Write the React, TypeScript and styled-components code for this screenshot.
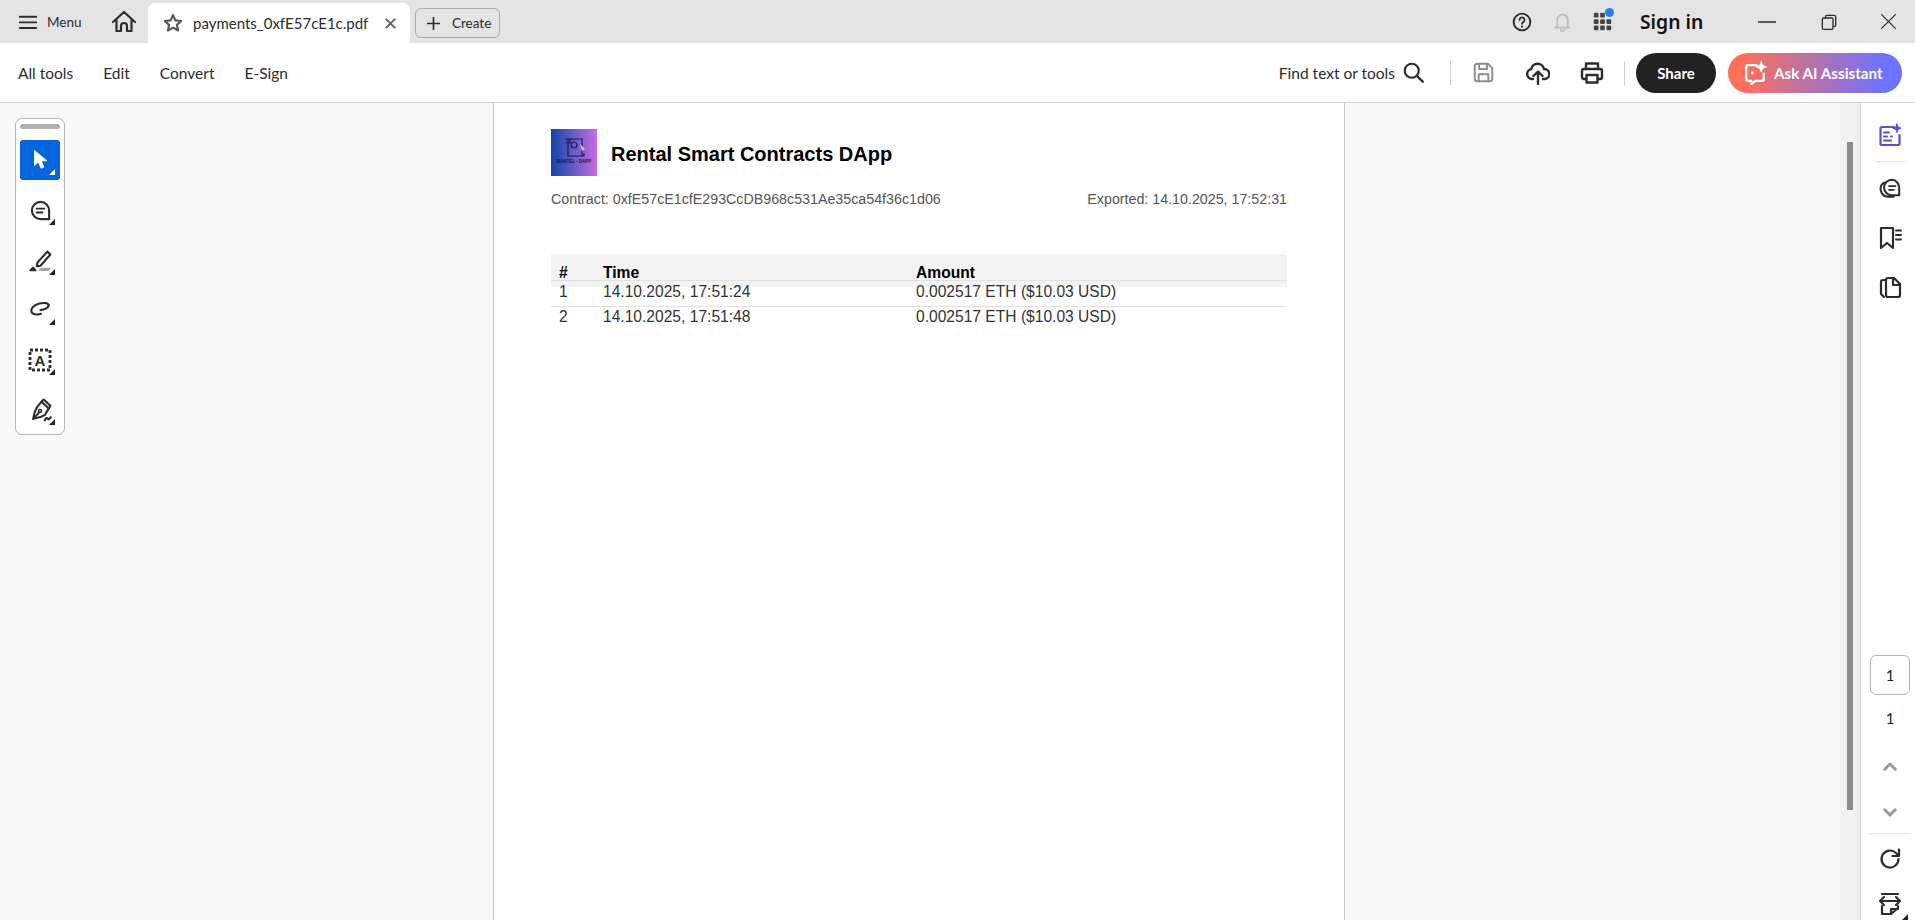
import React from "react";
import styled, { createGlobalStyle } from "styled-components";

const Global = createGlobalStyle`
  html, body { margin: 0; padding: 0; height: 100%; overflow: hidden; background: #fff; }
  #root { height: 100%; }
  * { box-sizing: border-box; }
`;

const uiFont = `"Lato", "Noto Sans", sans-serif`;
const pdfFont = `"Liberation Sans", Arial, sans-serif`;

const Window = styled.div`
  width: 1915px;
  height: 920px;
  display: flex;
  flex-direction: column;
  overflow: hidden;
  font-family: ${uiFont};
  color: #2c2c2c;
`;

/* title bar */
const TitleBar = styled.header`
  height: 43px;
  background: #e4e4e4;
  display: flex;
  align-items: flex-end;
  flex-shrink: 0;
`;
const MenuButton = styled.div`
  height: 43px;
  width: 112px;
  padding-left: 19px;
  display: flex;
  align-items: center;
  gap: 10px;
  font-size: 13.5px;
`;
const HomeButton = styled.div`
  height: 43px;
  width: 36px;
  display: flex;
  align-items: center;
`;
const Tab = styled.div`
  height: 40px;
  width: 262px;
  background: #fff;
  border-radius: 7px 7px 0 0;
  padding-left: 15px;
  display: flex;
  align-items: center;
  font-size: 15px;
`;
const TabName = styled.span`
  margin-left: 10px;
  width: 192px;
  white-space: nowrap;
`;
const CreateButton = styled.div`
  height: 30px;
  width: 85px;
  margin: 0 0 5px 5px;
  border: 1.5px solid #a9a9a9;
  border-radius: 6px;
  padding-left: 11px;
  display: flex;
  align-items: center;
  gap: 12px;
  font-size: 13.5px;
`;
const SystemArea = styled.div`
  margin-left: auto;
  height: 43px;
  display: flex;
  align-items: center;
`;
const Slot = styled.div<{ $w: number }>`
  width: ${(p) => p.$w}px;
  height: 24px;
  display: flex;
  align-items: center;
  position: relative;
  flex-shrink: 0;
`;
const Dot = styled.span`
  position: absolute;
  left: 12px;
  top: -2px;
  width: 9px;
  height: 9px;
  border-radius: 50%;
  background: #2680eb;
`;
const SignIn = styled.span`
  font-family: "Noto Sans", sans-serif;
  font-weight: 600;
  font-size: 19.3px;
  color: #111;
  white-space: nowrap;
`;

/* tool bar */
const ToolBar = styled.nav`
  height: 60px;
  background: #fff;
  border-bottom: 1px solid #d2d2d2;
  display: flex;
  align-items: center;
  padding-left: 18px;
  flex-shrink: 0;
`;
const NavLink = styled.span`
  font-size: 15.5px;
  margin-right: 30px;
  white-space: nowrap;
`;
const ToolActions = styled.div`
  margin-left: auto;
  display: flex;
  align-items: center;
  padding-right: 13px;
`;
const FindLabel = styled.span`
  font-size: 15.5px;
  width: 127px;
  white-space: nowrap;
  text-align: right;
  padding-right: 8px;
`;
const Divider = styled.span<{ $ml: number; $mr?: number }>`
  width: 1px;
  height: 24px;
  background: #cfcfcf;
  flex-shrink: 0;
  margin-left: ${(p) => p.$ml}px;
  margin-right: ${(p) => p.$mr ?? 0}px;
`;
const Pill = styled.div<{ $ai?: boolean }>`
  height: 40px;
  width: ${(p) => (p.$ai ? 174 : 80)}px;
  margin-left: ${(p) => (p.$ai ? 12 : 0)}px;
  border-radius: 20px;
  display: flex;
  align-items: center;
  justify-content: ${(p) => (p.$ai ? "flex-start" : "center")};
  padding-left: ${(p) => (p.$ai ? 15 : 0)}px;
  gap: 6px;
  color: #fff;
  font-weight: 700;
  font-size: ${(p) => (p.$ai ? 15.2 : 15)}px;
  white-space: nowrap;
  background: ${(p) => (p.$ai ? "linear-gradient(90deg, #ff7058 8%, #6b73ff 90%)" : "#222")};
`;

/* document area */
const Workspace = styled.main`
  flex: 1;
  min-height: 0;
  display: flex;
  background: #f8f8f8;
`;
const LeftCanvas = styled.div`
  width: 493px;
  padding: 15px;
  flex-shrink: 0;
`;
const ToolRail = styled.div`
  width: 50px;
  height: 317px;
  background: #fff;
  border: 1px solid #b4b4b4;
  border-radius: 7px;
  padding: 5px 4px;
  display: flex;
  flex-direction: column;
  align-items: center;
`;
const Handle = styled.span`
  width: 40px;
  height: 5px;
  flex-shrink: 0;
  border-radius: 3px;
  background: #b2b2b2;
  margin-bottom: 11px;
`;
const RailButton = styled.div<{ $active?: boolean }>`
  width: 40px;
  height: 40px;
  flex-shrink: 0;
  margin-bottom: 10px;
  border-radius: 3px;
  position: relative;
  display: flex;
  align-items: center;
  justify-content: center;
  background: ${(p) => (p.$active ? "#0265dc" : "transparent")};
  &:last-child { margin-bottom: 0; }
  &::after {
    content: "";
    position: absolute;
    right: 5px;
    bottom: 5px;
    border-style: solid;
    border-width: 0 0 6px 6px;
    border-color: transparent transparent ${(p) => (p.$active ? "#fff" : "#222")} transparent;
  }
`;
const Page = styled.article`
  width: 852px;
  flex-shrink: 0;
  background: #fff;
  border-left: 1px solid #c6c6c6;
  border-right: 1px solid #c6c6c6;
  padding: 26px 57px 0;
  font-family: ${pdfFont};
`;
const DocHeader = styled.div`
  display: flex;
  align-items: center;
  gap: 14px;
`;
const Logo = styled.div`
  width: 46px;
  height: 47px;
  background: linear-gradient(90deg, #0d47a8, #cb6ce6);
`;
const DocTitle = styled.h1`
  margin: 4px 0 0;
  font-size: 20px;
  font-weight: 700;
  color: #000;
`;
const MetaRow = styled.div`
  display: flex;
  justify-content: space-between;
  margin-top: 14px;
  font-size: 14.25px;
  line-height: 18px;
  color: #555;
`;
const PayTable = styled.div`
  margin-top: 46px;
  font-size: 15.6px;
  color: #333;
`;
const HeadRow = styled.div`
  height: 33px;
  background: #f3f3f3;
  position: relative;
  display: grid;
  grid-template-columns: 44px 313px 1fr;
  padding: 10px 0 0 8px;
  line-height: 18px;
  font-weight: 700;
  color: #000;
  &::after {
    content: "";
    position: absolute;
    left: 0;
    right: 0;
    top: 26px;
    height: 1px;
    background: #e2e2e2;
  }
`;
const RowGroup = styled.div`
  margin-top: -5px;
  position: relative;
`;
const BodyRow = styled.div`
  height: 25px;
  display: grid;
  grid-template-columns: 44px 313px 1fr;
  padding: 1px 0 0 8px;
  line-height: 18px;
  border-bottom: 1px solid #e2e2e2;
  &:last-child { border-bottom: 0; }
`;
const RightCanvas = styled.div`
  flex: 1;
`;
const ScrollTrack = styled.div`
  width: 20px;
  flex-shrink: 0;
  background: #f1f1f1;
  padding-top: 39px;
  display: flex;
  justify-content: center;
`;
const ScrollThumb = styled.div`
  width: 6px;
  height: 668px;
  background: #8b8b8b;
`;
const SideRail = styled.aside`
  width: 55px;
  flex-shrink: 0;
  background: #fff;
  border-left: 1px solid #d2d2d2;
  display: flex;
  flex-direction: column;
  align-items: center;
  padding: 20px 0 0 4px;
`;
const SideIcon = styled.div<{ $gap: number; $top?: number }>`
  height: 24px;
  margin-top: ${(p) => p.$top ?? 0}px;
  margin-bottom: ${(p) => p.$gap}px;
  display: flex;
  align-items: center;
  justify-content: center;
  flex-shrink: 0;
`;
const RailRule = styled.span<{ $w: number }>`
  width: ${(p) => p.$w}px;
  height: 1px;
  background: #e1e1e1;
  flex-shrink: 0;
`;
const PageBox = styled.div`
  width: 40px;
  height: 40px;
  margin-top: 356px;
  border: 1px solid #b4b4b4;
  border-radius: 6px;
  display: flex;
  align-items: center;
  justify-content: center;
  font-size: 15px;
  color: #222;
  flex-shrink: 0;
`;
const PageCount = styled.div`
  height: 18px;
  margin-top: 14px;
  line-height: 18px;
  font-size: 15px;
  color: #222;
  flex-shrink: 0;
`;
const Spacer = styled.div<{ $h: number }>`
  height: ${(p) => p.$h}px;
  flex-shrink: 0;
`;
const FitWrap = styled.div`
  position: relative;
  flex-shrink: 0;
  &::after {
    content: "";
    position: absolute;
    right: -6px;
    bottom: -4px;
    border-style: solid;
    border-width: 0 0 6px 6px;
    border-color: transparent transparent #222 transparent;
  }
`;

const Svg = styled.svg<{ $ml?: number; $color: string }>`
  display: block;
  flex-shrink: 0;
  fill: none;
  color: ${(p) => p.$color};
  stroke: currentColor;
  stroke-width: 2;
  stroke-linecap: round;
  stroke-linejoin: round;
  margin-left: ${(p) => p.$ml ?? 0}px;
`;

type IconProps = { size: number; color?: string; ml?: number; children: React.ReactNode };
const Icon = ({ size, color = "#2c2c2c", ml, children }: IconProps) => (
  <Svg $ml={ml} $color={color} width={size} height={size} viewBox="0 0 24 24">
    {children}
  </Svg>
);

const rows = [
  { n: 1, time: "14.10.2025, 17:51:24" },
  { n: 2, time: "14.10.2025, 17:51:48" },
];

export default function App() {
  return (
    <Window>
      <Global />
      <TitleBar>
        <MenuButton>
          <Icon size={18}><path d="M1 5h22M1 12.500h22M1 20h22" strokeWidth="2.400" /></Icon>
          Menu
        </MenuButton>
        <HomeButton>
          <Icon size={24}>
            <path d="M1 12 12 2l11 10M4.500 9.500V21H9v-5a3 3 0 0 1 6 0v5h4.500V9.500" strokeWidth="2.200" />
          </Icon>
        </HomeButton>
        <Tab>
          <Icon size={20} color="#555">
            <path d="m12 2.500 2.900 6.300 6.900.8-5.100 4.600 1.400 6.800-6.100-3.400-6.100 3.400 1.400-6.800L2.200 9.600l6.900-.8z" strokeWidth="2.600" />
          </Icon>
          <TabName>payments_0xfE57cE1c.pdf</TabName>
          <Icon size={11} color="#666"><path d="M3 3l18 18M21 3 3 21" strokeWidth="4.500" /></Icon>
        </Tab>
        <CreateButton>
          <Icon size={13}><path d="M12 1v22M1 12h22" strokeWidth="3" /></Icon>
          Create
        </CreateButton>
        <SystemArea>
          <Slot $w={40}>
            <Icon size={20}>
              <circle cx="12" cy="12" r="10" strokeWidth="2.300" />
              <path d="M9 9.500a3 3 0 1 1 4.500 2.600c-1 .6-1.500 1-1.500 2" strokeWidth="2.200" />
              <path d="M12 17.500v.2" strokeWidth="2.500" />
            </Icon>
          </Slot>
          <Slot $w={41}>
            <Icon size={21} color="#bcbcbc">
              <path d="M6 17V10a6 6 0 0 1 12 0v7l2 2H4zM10 21.500a2 2 0 0 0 4 0" />
            </Icon>
          </Slot>
          <Slot $w={47}>
            <Icon size={19} color="#444">
              <g fill="#444" stroke="none">
                <rect x="1" y="1" width="6" height="6" rx="1.500" /><rect x="9" y="1" width="6" height="6" rx="1.500" />
                <rect x="1" y="9" width="6" height="6" rx="1.500" /><rect x="9" y="9" width="6" height="6" rx="1.500" /><rect x="17" y="9" width="6" height="6" rx="1.500" />
                <rect x="1" y="17" width="6" height="6" rx="1.500" /><rect x="9" y="17" width="6" height="6" rx="1.500" /><rect x="17" y="17" width="6" height="6" rx="1.500" />
              </g>
            </Icon>
            <Dot />
          </Slot>
          <Slot $w={118}><SignIn>Sign in</SignIn></Slot>
          <Slot $w={63}><Icon size={18}><path d="M0 12h24" strokeWidth="2" /></Icon></Slot>
          <Slot $w={60}>
            <Icon size={16}>
              <path d="M7 6V3.500A1.500 1.500 0 0 1 8.500 2h11A2.500 2.500 0 0 1 22 4.500V17a1.500 1.500 0 0 1-1.500 1.500H18" strokeWidth="2" />
              <rect x="2" y="6" width="16" height="17" rx="2" strokeWidth="2" />
            </Icon>
          </Slot>
          <Slot $w={34}><Icon size={15}><path d="M1 1l22 22M23 1 1 23" strokeWidth="2" /></Icon></Slot>
        </SystemArea>
      </TitleBar>

      <ToolBar>
        <NavLink>All tools</NavLink>
        <NavLink>Edit</NavLink>
        <NavLink>Convert</NavLink>
        <NavLink>E-Sign</NavLink>
        <ToolActions>
          <FindLabel>Find text or tools</FindLabel>
          <Icon size={21}>
            <circle cx="10" cy="10" r="8" strokeWidth="2.400" />
            <path d="M16 16l6.500 6.500" strokeWidth="2.800" />
          </Icon>
          <Divider $ml={26} />
          <Icon size={21} color="#8e8e8e" ml={22}>
            <path d="M2 5a3 3 0 0 1 3-3h12l5 5v12a3 3 0 0 1-3 3H5a3 3 0 0 1-3-3z" strokeWidth="2.200" />
            <path d="M7 2v6h9V2M6.500 22v-8h11v8" strokeWidth="2.200" />
          </Icon>
          <Icon size={24} ml={32}>
            <path d="M7 18H6a5 5 0 0 1-.8-9.900A6.500 6.500 0 0 1 18 8a5 5 0 0 1 .5 10H17" strokeWidth="2.400" />
            <path d="M12 23V11M7.500 15 12 10.500 16.500 15" strokeWidth="2.400" />
          </Icon>
          <Icon size={24} ml={30}>
            <path d="M6 8V2.500h12V8" strokeWidth="2.400" />
            <path d="M6 18H4a2 2 0 0 1-2-2V10a2 2 0 0 1 2-2h16a2 2 0 0 1 2 2v6a2 2 0 0 1-2 2h-2" strokeWidth="2.400" />
            <rect x="6.500" y="14" width="11" height="7.500" strokeWidth="2.400" />
          </Icon>
          <Divider $ml={20} $mr={11} />
          <Pill>Share</Pill>
          <Pill $ai>
            <Icon size={25} color="#fff">
              <path d="M13 5H5a2 2 0 0 0-2 2v11a2 2 0 0 0 2 2h3v3l4-3h6a2 2 0 0 0 2-2v-5" strokeWidth="2.200" />
              <path d="M17.500 1.500 18.800 5 22.500 6.500 18.800 8 17.500 11.500 16.200 8 12.500 6.500 16.200 5z" fill="#fff" strokeWidth="1" />
              <circle cx="9" cy="12.500" r="1.400" fill="#fff" stroke="none" />
            </Icon>
            Ask AI Assistant
          </Pill>
        </ToolActions>
      </ToolBar>

      <Workspace>
        <LeftCanvas>
          <ToolRail>
            <Handle />
            <RailButton $active>
              <Icon size={22} color="#fff">
                <path d="M6 2v16l4.200-3.800 3 6.800 3-1.300-3-6.600 5.800-.3z" fill="#fff" strokeWidth="1" />
              </Icon>
            </RailButton>
            <RailButton>
              <Icon size={23}>
                <path d="M12 3a9 9 0 1 0 0 18h9v-9a9 9 0 0 0-9-9z" strokeWidth="2.200" />
                <path d="M8 10h8M8 14h6" strokeWidth="2" />
              </Icon>
            </RailButton>
            <RailButton>
              <Icon size={25}>
                <path d="M9 14 18.500 3.500l3 2.700L12 17l-3.500.5z" strokeWidth="2" />
                <path d="M2 21.500l3-3 2.500 3z" fill="#2c2c2c" strokeWidth="1.500" />
                <path d="M10 22l2.500-3H22l-2 3z" fill="#a4a4a4" stroke="none" />
              </Icon>
            </RailButton>
            <RailButton>
              <Icon size={23}>
                <path d="M20.500 6.500C20 4 15 3.500 10 5 5 6.500 1.800 10 2.500 13c.7 3 6 4 10 2.500" strokeWidth="2.200" />
                <path d="M20.500 6.500c.3 2.500-4 4.500-8.500 5" strokeWidth="2.200" />
              </Icon>
            </RailButton>
            <RailButton>
              <Icon size={24}>
                <rect x="2" y="2" width="20" height="20" strokeDasharray="3 2" strokeLinecap="butt" strokeWidth="2.800" />
                <text x="12" y="18" textAnchor="middle" fontSize="15" fontWeight="700" fontFamily="Liberation Sans" fill="#2c2c2c" stroke="none">A</text>
              </Icon>
            </RailButton>
            <RailButton>
              <Icon size={25}>
                <path d="M13 3.500 20 10l-4 6.500c-3 1.800-7 3-11 3.500.5-4 1.700-8 3.500-11z" strokeWidth="2" />
                <path d="M5 20l5.500-6M13 3.500l2-2 6.500 6-1.500 2.500" strokeWidth="2" />
                <circle cx="11.500" cy="12.500" r="1.500" strokeWidth="1.500" />
                <path d="M16 21.500c1-2 2-3 3-1.500s2-1 3-1.500" strokeWidth="2" />
              </Icon>
            </RailButton>
          </ToolRail>
        </LeftCanvas>

        <Page>
          <DocHeader>
            <Logo>
              <svg width="46" height="47" viewBox="0 0 46 47">
                <g fill="none" stroke="#1b1b55" strokeWidth="1.200">
                  <path d="M17 10h14v17H17zM14 10h5v4h-5M28 27h5v-3" />
                  <circle cx="23" cy="16" r="3" />
                </g>
                <path d="M29 15l5 5-3 2z" fill="#ddb8f0" />
                <text x="23" y="34" textAnchor="middle" fontSize="4.500" fontWeight="700" fontFamily="Liberation Sans" fill="#15153f">RANTEL - DAPP</text>
              </svg>
            </Logo>
            <DocTitle>Rental Smart Contracts DApp</DocTitle>
          </DocHeader>
          <MetaRow>
            <span>Contract: 0xfE57cE1cfE293CcDB968c531Ae35ca54f36c1d06</span>
            <span>Exported: 14.10.2025, 17:52:31</span>
          </MetaRow>
          <PayTable>
            <HeadRow>
              <span>#</span>
              <span>Time</span>
              <span>Amount</span>
            </HeadRow>
            <RowGroup>
              {rows.map((r) => (
                <BodyRow key={r.n}>
                  <span>{r.n}</span>
                  <span>{r.time}</span>
                  <span>0.002517 ETH ($10.03 USD)</span>
                </BodyRow>
              ))}
            </RowGroup>
          </PayTable>
        </Page>

        <RightCanvas />
        <ScrollTrack>
          <ScrollThumb />
        </ScrollTrack>

        <SideRail>
          <SideIcon $gap={14}>
            <Icon size={24} color="#5a50d8">
              <path d="M16 4H4a1.500 1.500 0 0 0-1.500 1.500v15A1.500 1.500 0 0 0 4 22h16a1.500 1.500 0 0 0 1.500-1.500V12" strokeWidth="2.200" />
              <path d="M6 9.500h5M6 13.500h3M6 17.500h7M13 13.500h1" strokeWidth="2" />
              <path d="M19 1l1.200 3 3 1.200-3 1.200L19 9.500l-1.200-3-3-1.200 3-1.200z" fill="#5a50d8" strokeWidth="1" />
            </Icon>
          </SideIcon>
          <RailRule $w={29} />
          <SideIcon $top={14} $gap={26}>
            <Icon size={22}>
              <path d="M14 3a8.500 8.500 0 1 0 0 17h8v-8.500A8.500 8.500 0 0 0 14 3z" strokeWidth="2.200" />
              <path d="M11 10h7M11 14h5" strokeWidth="2" />
              <path d="M5.500 6A8.500 8.500 0 0 0 10 21.500h6" strokeWidth="2.200" />
            </Icon>
          </SideIcon>
          <SideIcon $gap={25}>
            <Icon size={24}>
              <path d="M3 2h12v20l-6-5-6 5z" strokeWidth="2.200" />
              <path d="M18 4.500h5M18 9h5M18 13.500h5" strokeWidth="2" />
            </Icon>
          </SideIcon>
          <SideIcon $gap={0}>
            <Icon size={24}>
              <path d="M8 7V5a2 2 0 0 1 2-2h6l6 6v11a2 2 0 0 1-2 2H10a2 2 0 0 1-2-2z" strokeWidth="2.200" />
              <path d="M15 3v7h7" strokeWidth="2.200" />
              <path d="M8 5H5a2 2 0 0 0-2 2v12l3 3" strokeWidth="2.200" />
            </Icon>
          </SideIcon>
          <PageBox>1</PageBox>
          <PageCount>1</PageCount>
          <Spacer $h={31} />
          <Icon size={18} color="#9a9a9a"><path d="M5 15l7-7 7 7" strokeWidth="4" /></Icon>
          <Spacer $h={27} />
          <Icon size={18} color="#9a9a9a"><path d="M5 9l7 7 7-7" strokeWidth="4" /></Icon>
          <Spacer $h={12} />
          <RailRule $w={41} />
          <Spacer $h={13} />
          <Icon size={24}>
            <path d="M20.500 12a8.500 8.500 0 1 1-2.500-6l2.500 2.500" strokeWidth="2.200" />
            <path d="M21 2.500V9h-6.500" strokeWidth="2.200" />
          </Icon>
          <Spacer $h={21} />
          <FitWrap>
            <Icon size={24}>
              <path d="M4 2h16M4 22h9l7-6v-2M4 14v8" strokeWidth="2.200" />
              <path d="M2 9h20M6 5 2 9l4 4M18 5l4 4-4 4M13 22v-5h7" strokeWidth="2.200" />
            </Icon>
          </FitWrap>
        </SideRail>
      </Workspace>
    </Window>
  );
}
